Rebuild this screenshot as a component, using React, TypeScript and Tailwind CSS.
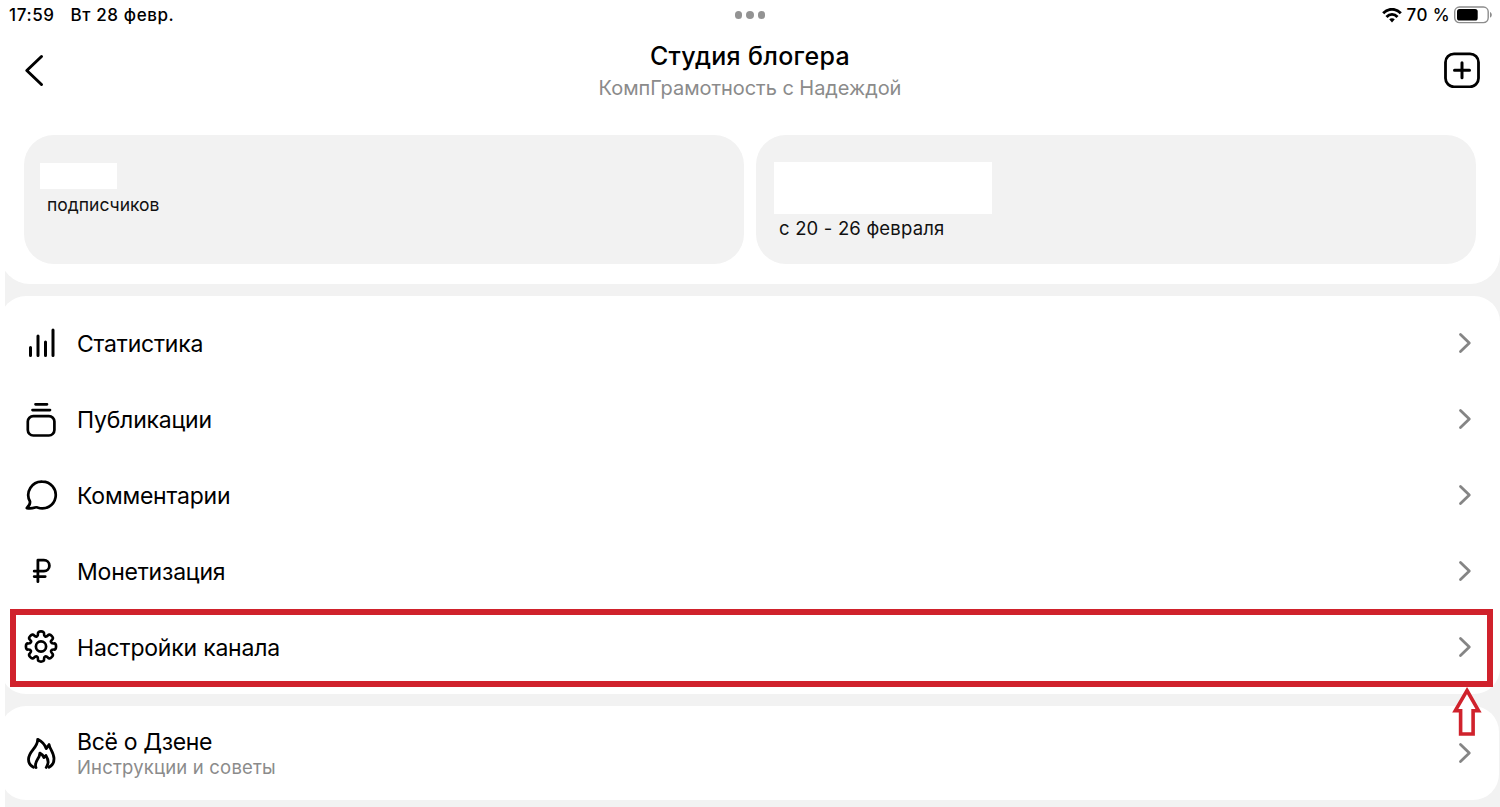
import React from 'react';

const stroke = {
  fill: 'none',
  stroke: 'currentColor',
  strokeWidth: 3,
  strokeLinecap: 'round',
  strokeLinejoin: 'round',
} as const;

const StatsIcon = () => (
  <svg width="36" height="36" viewBox="0 0 36 36" {...stroke}>
    <path d="M7.500 22.500v8M15 11v19.500M22.500 17v13.500M30 5v25.500" />
  </svg>
);

const PostsIcon = () => (
  <svg width="36" height="36" viewBox="0 0 36 36" {...stroke} strokeWidth={2.7}>
    <path d="M12.500 3.300h11.500M9.500 9.100h17.500" />
    <rect x="4.800" y="15.100" width="26.600" height="19.400" rx="5.500" />
  </svg>
);

const CommentIcon = () => (
  <svg width="36" height="36" viewBox="0 0 36 36" {...stroke} strokeWidth={2.7}>
    <path d="M19.300 4.600a13.400 13.400 0 1 1-4.800 25.900c-.9-.4-1.600-.3-2.500 0-2.600.9-5.200 1.100-8.200.6 2.400-2.200 3.500-3.900 3.200-6.600A13.400 13.400 0 0 1 19.300 4.600z" />
  </svg>
);

const RubleIcon = () => (
  <svg width="36" height="36" viewBox="0 0 36 36" {...stroke} strokeWidth={2.8}>
    <path d="M14.900 28.700V7.200h6a5.500 5.500 0 0 1 0 11H11.200M11.200 23.600h11" />
  </svg>
);

// 8 rounded teeth: control points in polar form, joined through their midpoints
const gearPoints = Array.from({ length: 8 }).flatMap((_, i) =>
  [[15.4, -12], [15.4, 12], [11, 15], [11, 30]].map(([r, a]) => {
    const angle = ((a + i * 45) * Math.PI) / 180;
    return [18 + r * Math.sin(angle), 17.5 - r * Math.cos(angle)];
  })
);

const gearPath =
  gearPoints
    .map(([x, y], i) => {
      const [nx, ny] = gearPoints[(i + 1) % gearPoints.length];
      const [px, py] = gearPoints[(i + gearPoints.length - 1) % gearPoints.length];
      const start = i === 0 ? `M${(px + x) / 2} ${(py + y) / 2}` : '';
      return `${start}Q${x} ${y} ${(x + nx) / 2} ${(y + ny) / 2}`;
    })
    .join('') + 'Z';

const GearIcon = () => (
  <svg width="36" height="36" viewBox="0 0 36 36" {...stroke} strokeWidth={2.7}>
    <circle cx="18" cy="17.500" r="5.100" />
    <path d={gearPath} />
  </svg>
);

const FireIcon = () => (
  <svg width="36" height="36" viewBox="0 0 36 36" {...stroke} strokeWidth={2.8}>
    <path d="M10.500 32.300C7.300 30.700 5.500 27.800 5.500 24.300c0-8.300 9.300-11.300 9.200-20 4.200 2.200 7.300 5.200 8.500 9.300l2.900-4c.4 4.100 4.900 8 4.900 14.200 0 3.700-1.900 6.900-5 8.500" />
    <path d="M13 32.500c-2.600-5.700 3.700-8.300 3.900-14.400 2 .9 3.300 2.300 4 4.500l2-2.200c2.500 4 3 8.500.3 12.100" />
  </svg>
);

const Chevron = () => (
  <svg width="14" height="22" viewBox="0 0 14 22" {...stroke} strokeWidth={2.8} className="text-[#858585]">
    <path d="M2.500 2.500l8.800 8.500-8.800 8.500" />
  </svg>
);

const WifiIcon = () => (
  <svg width="20" height="15" viewBox="0 0 20 15" fill="none" stroke="#000" strokeWidth="2.800">
    <path d="M1.200 5.300C6-.1 14-.1 18.800 5.300" />
    <path d="M4.500 9c3.200-3.600 7.800-3.600 11 0" />
    <path d="M7.200 11.300c1.600-1.500 4-1.500 5.600 0L10 14.500z" fill="#000" stroke="none" />
  </svg>
);

const BatteryIcon = () => (
  <svg width="40" height="18" viewBox="0 0 40 18">
    <rect x=".7" y="1" width="33.500" height="15.600" rx="4.800" fill="none" stroke="#8c8c8c" strokeWidth="1.400" />
    <rect x="3" y="3.100" width="20.700" height="11.400" rx="2.600" />
    <path d="M36 6c2.400.9 2.400 4.700 0 5.600z" fill="#8c8c8c" />
  </svg>
);

interface MenuRowProps {
  icon: React.ReactNode;
  label: string;
  highlighted?: boolean;
}

const MenuRow = ({ icon, label, highlighted }: MenuRowProps) => (
  <li className="relative flex h-[76.100px] items-center pl-[23px] pr-7">
    {icon}
    <span className="ml-[18px] flex-1 pt-[2px] text-[23px] leading-7 tracking-[-0.210px]">{label}</span>
    <Chevron />
    {highlighted && (
      <div className="pointer-events-none absolute -bottom-[2px] left-[10px] right-[7px] top-0 border-6 border-[#d0222c]">
        <svg width="30" height="52" viewBox="0 0 30 52" className="absolute right-[5px] top-[69px]" fill="#fff" stroke="#d0222c" strokeWidth="3.600">
          <path d="M15 6.500L26.500 26.700h-5.400V50H8.600V26.700H3.300z" />
        </svg>
      </div>
    )}
  </li>
);

const items: MenuRowProps[] = [
  { icon: <StatsIcon />, label: 'Статистика' },
  { icon: <PostsIcon />, label: 'Публикации' },
  { icon: <CommentIcon />, label: 'Комментарии' },
  { icon: <RubleIcon />, label: 'Монетизация' },
  { icon: <GearIcon />, label: 'Настройки канала', highlighted: true },
];

export default function App() {
  return (
    <div className="h-[807px] w-[1500px] overflow-hidden bg-white pl-[5px] font-['Inter','Liberation_Sans',sans-serif] text-black">
      <div className="flex h-full flex-col gap-3 bg-[#f2f2f2]">
        <section className="-ml-[5px] flex h-[284px] shrink-0 flex-col rounded-b-[30px] bg-white">
          <div className="grid h-[30px] shrink-0 grid-cols-3 items-center text-[17px] font-medium leading-5">
            <div className="flex gap-4 pl-[9px] tracking-[0.600px]">
              <span>17:59</span>
              <span>Вт 28 февр.</span>
            </div>
            <div className="flex justify-center gap-[4px]">
              <i className="size-[7.500px] rounded-full bg-[#939393]" />
              <i className="size-[7.500px] rounded-full bg-[#939393]" />
              <i className="size-[7.500px] rounded-full bg-[#939393]" />
            </div>
            <div className="flex items-center justify-end gap-1 pr-[6px]">
              <WifiIcon />
              <span className="ml-px tracking-[0.400px]">70 %</span>
              <BatteryIcon />
            </div>
          </div>

          <header className="flex h-[105px] shrink-0 items-start justify-between pl-6 pr-5">
            <button aria-label="Назад" className="mt-[22px] w-8">
              <svg width="22" height="36" viewBox="0 0 22 36" {...stroke}>
                <path d="M17.500 4.500L2.800 18.500l14.700 14" />
              </svg>
            </button>
            <div className="pt-[10px] text-center">
              <h1 className="text-[25px] font-medium leading-8 tracking-[0.320px]">Студия блогера</h1>
              <p className="text-[20px] leading-8 tracking-[-0.050px] text-[#8b8b8b]">КомпГрамотность с Надеждой</p>
            </div>
            <button aria-label="Добавить" className="mt-[22px]">
              <svg width="36" height="36" viewBox="0 0 36 36" {...stroke} strokeWidth={2.8}>
                <rect x="1.500" y="1.800" width="33" height="33" rx="8.500" />
                <path d="M18 10.800v15M10.500 18.300h15" strokeWidth={3} />
              </svg>
            </button>
          </header>

          <div className="grid grid-cols-2 gap-3 pl-6 pr-6 leading-6 text-[#111]">
            <div className="h-[129px] rounded-[30px] bg-[#f2f2f2] pl-4 pt-7">
              <div className="h-[26px] w-[77px] bg-white" />
              <p className="ml-[7px] mt-[4px] text-[17.500px]">подписчиков</p>
            </div>
            <div className="h-[129px] rounded-[30px] bg-[#f2f2f2] pl-[18px] pt-[27px]">
              <div className="h-[52px] w-[218px] bg-white" />
              <p className="ml-[5px] mt-[2px] text-[18.500px] tracking-[0.180px]">с 20 - 26 февраля</p>
            </div>
          </div>
        </section>

        <ul className="relative z-10 -ml-[5px] h-[398px] shrink-0 rounded-[26px] bg-white pt-[9px]">
          {items.map((item) => (
            <MenuRow key={item.label} {...item} />
          ))}
        </ul>

        <section className="-ml-[5px] mr-px flex h-[94px] shrink-0 items-center rounded-[26px] bg-white pl-[23px] pr-[27px]">
          <FireIcon />
          <div className="ml-[18px] flex-1 pt-[3px]">
            <p className="text-[23px] leading-[25px] tracking-[-0.350px]">Всё о Дзене</p>
            <p className="text-[18.500px] leading-[25px] tracking-[0.180px] text-[#8b8b8b]">Инструкции и советы</p>
          </div>
          <Chevron />
        </section>
      </div>
    </div>
  );
}
